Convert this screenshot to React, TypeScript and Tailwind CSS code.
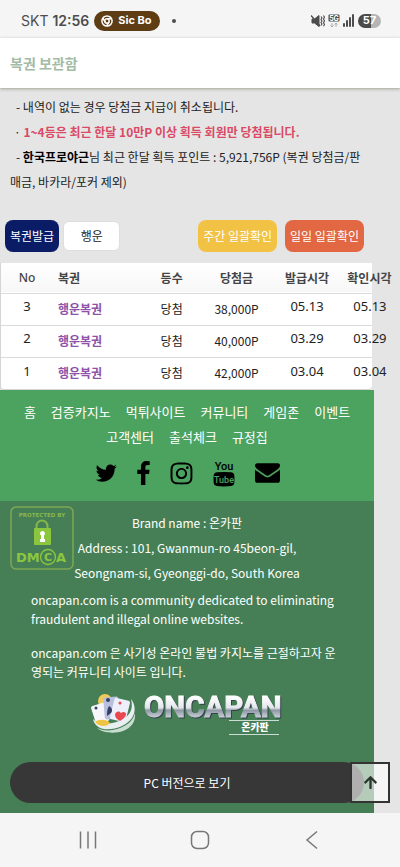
import React from 'react';
import { FaInstagram, FaArrowUp } from 'react-icons/fa';

const tickets = [
  { no: 3, name: '행운복권', rank: '당첨', prize: '38,000P', issued: '05.13', checked: '05.13' },
  { no: 2, name: '행운복권', rank: '당첨', prize: '40,000P', issued: '03.29', checked: '03.29' },
  { no: 1, name: '행운복권', rank: '당첨', prize: '42,000P', issued: '03.04', checked: '03.04' },
];

const menu = ['홈', '검증카지노', '먹튀사이트', '커뮤니티', '게임존', '이벤트', '고객센터', '출석체크', '규정집'];

const StatusBar = () => (
  <div className="flex h-[38px] items-center bg-[#f5f5f5] pr-[19px] pl-[21px] pt-[3px] font-['Inter',sans-serif] text-[#4d4d4d]">
    <span className="text-sm">SKT</span>
    <span className="ml-1 text-sm font-semibold">12:56</span>
    <span className="ml-[5px] flex h-5 items-center gap-[5px] rounded-full bg-[#5e3c14] pr-2 pl-[7px] text-[11px] font-bold text-white">
      <svg viewBox="0 0 24 24" className="h-3 w-3" fill="none" stroke="currentColor" strokeWidth="3">
        <circle cx="12" cy="12" r="10.2" />
        <circle cx="12" cy="12" r="4.4" />
        <path d="M12 7.6h9M8.2 14.2 3.7 6.4M15.8 14.2l-4.6 8" />
      </svg>
      Sic Bo
    </span>
    <span className="ml-3 h-1 w-1 rounded-full bg-[#4d4d4d]" />
    <div className="ml-auto flex items-center gap-[3px]">
      <svg viewBox="0 0 14 14" className="h-[14px] w-[14px]" fill="none" stroke="#4d4d4d">
        <path d="M1 5h2.5L8 1.5v11L3.5 9H1z" fill="#4d4d4d" />
        <path d="M0 1.5 9 12" strokeWidth="1.4" />
        <path d="M10 2.5l1 1.5-1 1.5 1 1.5-1 1.5 1 1.5-1 1.5M12.5 1.5l1 1.8-1 1.8 1 1.8-1 1.8 1 1.8-1 1.8" strokeWidth="1.1" />
      </svg>
      <svg viewBox="0 0 12 14" className="h-[14px] w-3">
        <rect x="0.5" y="0.5" width="11" height="7" rx="1" fill="#4d4d4d" />
        <text x="6" y="6.5" textAnchor="middle" fontSize="7" fontWeight="700" fill="#fff">5G</text>
        <path d="M4 9v4M2.5 11.5 4 13l1.5-1.5M8 13V9M6.5 10.5 8 9l1.5 1.5" fill="none" stroke="#a8a8a8" />
      </svg>
      <svg viewBox="0 0 12 13" className="h-[13px] w-3" fill="#4d4d4d">
        <rect x="0" y="9" width="2" height="4" rx="1" />
        <rect x="3" y="6" width="2" height="7" rx="1" />
        <rect x="6" y="3" width="2" height="10" rx="1" />
        <rect x="9" y="0" width="2" height="13" rx="1" />
      </svg>
      <span className="flex h-[14px] w-[23px] items-center justify-center rounded-full bg-linear-to-r from-[#4a4a4a] from-57% to-[#b5b5b5] to-57% text-[11px] font-bold text-white">
        57
      </span>
    </div>
  </div>
);

const DmcaBadge = () => (
  <svg viewBox="0 0 64 64" className="h-16 w-16" role="img" aria-label="Protected by DMCA">
    <rect x="1" y="1" width="62" height="62" rx="5" fill="none" stroke="#7ea854" strokeWidth="1.5" />
    <text x="32" y="11" textAnchor="middle" fontFamily="DejaVu Sans" fontSize="5.5" fontWeight="700" fill="#86b84c">
      PROTECTED BY
    </text>
    <path d="M26.5 22v-2a5.5 5.5 0 0 1 11 0v2" fill="none" stroke="#86b84c" strokeWidth="2" />
    <rect x="24" y="22" width="17" height="17" rx="1" fill="#8cc63f" />
    <path d="M32.5 25a2.5 2.5 0 0 0-1.5 4.5V33h-1v3h5v-3h-1v-3.5a2.5 2.5 0 0 0-1.5-4.5z" fill="#fff" />
    <g fontFamily="DejaVu Sans" fontSize="13" fontWeight="700" fill="#8cc63f">
      <text x="6" y="56">DM</text>
      <text x="46" y="56">A</text>
      <text x="38" y="55" textAnchor="middle" fontSize="11">C</text>
    </g>
    <circle cx="38" cy="51" r="7.5" fill="none" stroke="#8cc63f" strokeWidth="1.3" />
  </svg>
);

const TwitterIcon = () => (
  <svg viewBox="60 250 1640 1350" className="h-[19px] w-[22px]" fill="currentColor">
    <path d="M1684 408q-67 98-162 167 1 14 1 42 0 130-38 259.5t-115.5 248.5-184.5 210.5-258 146-323 54.5q-271 0-496-145 35 4 78 4 225 0 401-138-105-2-188-64.5t-114-159.5q33 5 61 5 43 0 85-11-112-23-185.5-111.5t-73.5-205.5v-4q68 38 146 41-66-44-105-115t-39-154q0-88 44-163 121 149 294.5 238.5t371.5 99.5q-8-38-8-74 0-134 94.5-228.5t228.5-94.5q140 0 236 102 109-21 205-78-37 115-142 178 93-10 186-50z" />
  </svg>
);

const FacebookIcon = () => (
  <svg viewBox="470 0 880 1670" className="h-6 w-[13px]" fill="currentColor">
    <path d="M1343 12v264h-157q-86 0-116 36t-30 108v189h293l-39 296h-254v759h-306v-759h-255v-296h255v-218q0-186 104-288.5t277-102.5q147 0 228 12z" />
  </svg>
);

const MailIcon = () => (
  <svg viewBox="0 256 1792 1408" className="h-5 w-[25px]" fill="currentColor">
    <path d="M1792 710v794q0 66-47 113t-113 47h-1472q-66 0-113-47t-47-113v-794q44 49 101 87 362 246 497 345 57 42 92.5 65.5t94.5 48 110 24.5h2q51 0 110-24.5t94.5-48 92.5-65.5q170-123 498-345 57-39 100-87zm0-294q0 79-49 151t-122 123q-376 261-468 325-10 7-42.5 31t-54 38.5-52 32.5-57.5 27-50 9h-2q-23 0-50-9t-57.5-27-52-32.5-54-38.5-42.5-31q-91-64-262-182.5t-205-142.5q-62-42-117-115.5t-55-136.5q0-78 41.5-130t118.5-52h1472q65 0 112.5 47t47.5 113z" />
  </svg>
);

const YoutubeIcon = () => (
  <svg viewBox="0 0 22 27" className="h-[27px] w-[22px]" fontFamily="Roboto, sans-serif" textAnchor="middle">
    <text x="11" y="10" fontSize="11" fontWeight="500">You</text>
    <path d="M4 12.3q7-.8 14 0 3 .3 3.3 3 .4 4 0 8-.3 2.600-3 2.800-7.300.6-14.600 0-2.700-.2-3-2.800-.4-4 0-8 .3-2.700 3.300-3z" />
    <text x="11" y="23" fontSize="9" fontWeight="500" fill="#4ca25f">Tube</text>
  </svg>
);

const Logo = () => (
  <svg viewBox="0 0 192 46" className="h-[46px] w-48" role="img" aria-label="ONCAPAN 온카판">
    <defs>
      <linearGradient id="chrome" x1="0" y1="0" x2="0" y2="1">
        <stop offset="20%" stopColor="#ffffff" />
        <stop offset="52%" stopColor="#e3e6ec" />
        <stop offset="60%" stopColor="#8f98a6" />
        <stop offset="80%" stopColor="#c9ced6" />
      </linearGradient>
    </defs>
    <circle cx="14" cy="10" r="7" fill="#efc95a" />
    <path d="M2 28c2 11 16 13 29 7s16-18 9-27c3 11-2 18-12 22S8 34 2 28z" fill="#e8eff0" />
    <path d="M6 37c8 4 20 3 29-3 5-3 8-8 9-12 1 9-4 15-12 18S11 42 6 37z" fill="#c9ddd0" />
    <rect x="2" y="13" width="14" height="19" rx="2" fill="#f7f7fb" transform="rotate(-18 9 22)" />
    <rect x="13" y="6" width="15" height="22" rx="2" fill="#b9c0df" transform="rotate(-5 20 17)" />
    <rect x="21" y="8" width="16" height="22" rx="2" fill="#edeffb" transform="rotate(14 29 19)" />
    <path d="M18 15c3 2 4 4 2 7l-4 3c0-4 0-7 2-10z" fill="#354064" />
    <circle cx="17" cy="9" r="2" fill="#354064" />
    <circle cx="5" cy="17" r="1.5" fill="#354064" />
    <circle cx="29" cy="12" r="1.5" fill="#e64a50" />
    <path d="M29 30c-6-3-6-8-3-9 2-1 3 0 4 1 2-2 5-1 5 1 0 3-3 5-6 7z" fill="#e8484e" />
    <path d="M4 31c3-3 12-3 15 1-3 4-11 4-15-1z" fill="#efc443" />
    <text
      x="53"
      y="26"
      fontFamily="Roboto, sans-serif"
      fontSize="29.5"
      fontWeight="700"
      fill="url(#chrome)"
      stroke="url(#chrome)"
      className="drop-shadow-[1px_1px_0_#34424a]"
    >
      ONCAPAN
    </text>
    <path d="M138 29.5h50M138 43.5h50" stroke="#cfdcd3" />
    <text x="164" y="40" textAnchor="middle" fontSize="10" fontWeight="900" fill="#fff">온카판</text>
  </svg>
);

const App: React.FC = () => {
  return (
    <div className="flex min-h-screen flex-col bg-[#e5e5e5] font-['Noto_Sans_CJK_KR',sans-serif] text-xs text-[#222]">
      <StatusBar />

      <header className="z-10 flex h-[50px] items-center bg-white px-[10px] shadow-[0_1px_3px_rgba(90,100,70,0.5)]">
        <h1 className="text-sm font-bold text-[#a4bba5]">복권 보관함</h1>
      </header>

      <main>
        <div className="mr-[7%] px-[10px] pt-[6px] leading-[25px]">
          <p className="pl-[6px]">- 내역이 없는 경우 당첨금 지급이 취소됩니다.</p>
          <p className="pl-1">
            · <strong className="font-bold text-[#d94a66]">1~4등은 최근 한달 10만P 이상 획득 회원만 당첨됩니다.</strong>
          </p>
          <p className="indent-[6px]">
            - <strong className="font-bold text-black">한국프로야근</strong>님 최근 한달 획득 포인트 : 5,921,756P (복권 당첨금/판매금, 바카라/포커 제외)
          </p>
        </div>

        <div className="mt-[26px] mr-[9%] flex items-center pl-[5px]">
          <button className="h-8 rounded-lg bg-[#0b1c66] px-[5px] text-white">복권발급</button>
          <button className="ml-1 h-[30px] w-[57px] rounded-md border border-[#dedede] bg-white">행운</button>
          <button className="ml-auto h-8 rounded-lg bg-[#f2c244] px-[5px] text-white">주간 일괄확인</button>
          <button className="ml-2 h-8 rounded-lg bg-[#e16843] px-[5px] text-white">일일 일괄확인</button>
        </div>

        <div className="mt-[11px] w-[93%] rounded-b border-b border-l border-[#d5d5d5] bg-white">
          <table className="w-full table-fixed border-collapse whitespace-nowrap">
            <colgroup>
              <col className="w-[14%]" />
              <col className="w-[24%]" />
              <col className="w-[16%]" />
              <col className="w-[19%]" />
              <col className="w-[19%]" />
              <col className="w-[8%]" />
            </colgroup>
            <thead>
              <tr className="h-[30px] border-b border-[#dcdcdc] bg-linear-to-b from-white to-[#f7f7f7] text-[#444]">
                <th className="font-['Noto_Sans'] font-medium">No</th>
                <th className="pl-[5px] text-left font-bold">복권</th>
                <th className="font-bold">등수</th>
                <th className="font-bold">당첨금</th>
                <th className="font-bold">발급시각</th>
                <th className="pl-[5px] text-left font-bold">확인시각</th>
              </tr>
            </thead>
            <tbody>
              {tickets.map((t) => (
                <tr key={t.no} className="h-8 border-b border-[#dcdcdc] text-center last:border-b-0">
                  <td className="pb-1 font-['Noto_Sans'] text-[13px]">{t.no}</td>
                  <td className="pl-[5px] text-left font-bold text-[#8e52a8]">{t.name}</td>
                  <td>{t.rank}</td>
                  <td>{t.prize}</td>
                  <td className="pb-1 font-['Noto_Sans'] text-[13px]">{t.issued}</td>
                  <td className="pb-1 pl-[11px] text-left font-['Noto_Sans'] text-[13px]">{t.checked}</td>
                </tr>
              ))}
            </tbody>
          </table>
        </div>
      </main>

      <footer className="relative flex-1">
        <div className="mr-[26px] bg-[#4ca25f] px-4 pt-[9px] pb-[14px]">
          <nav className="flex flex-wrap justify-center gap-x-[15px] text-[13px] leading-[25px] text-white">
            {menu.map((item) => (
              <a key={item} href="#">{item}</a>
            ))}
          </nav>
          <div className="mt-[10px] flex h-7 items-center justify-center gap-5 text-black">
            <a href="#" aria-label="Twitter"><TwitterIcon /></a>
            <a href="#" aria-label="Facebook"><FacebookIcon /></a>
            <a href="#" aria-label="Instagram"><FaInstagram className="h-[25px] w-[23px]" /></a>
            <a href="#" aria-label="YouTube"><YoutubeIcon /></a>
            <a href="#" aria-label="Mail"><MailIcon /></a>
          </div>
        </div>

        <div className="relative mr-[26px] bg-[#467f55] pt-[9px] pb-[10px] text-white">
          <div className="absolute top-[5px] left-[10px]">
            <DmcaBadge />
          </div>
          <p className="px-[70px] text-center leading-[25px]">
            Brand name : 온카판
            <br />
            Address : 101, Gwanmun-ro 45beon-gil, Seongnam-si, Gyeonggi-do, South Korea
          </p>
          <p className="mt-[5px] px-[31px] leading-[19px]">
            oncapan.com is a community dedicated to eliminating fraudulent and illegal online websites.
          </p>
          <p className="mt-[15px] px-[31px] leading-[19px]">
            oncapan.com 은 사기성 온라인 불법 카지노를 근절하고자 운영되는 커뮤니티 사이트 입니다.
          </p>
          <div className="mt-[10px] flex justify-center">
            <Logo />
          </div>
          <div className="mt-[25px] px-[10px]">
            <button className="h-[41px] w-full rounded-full bg-[#373737] text-white">PC 버전으로 보기</button>
          </div>
        </div>

        <button
          aria-label="맨 위로"
          className="absolute right-[10px] bottom-[10px] flex h-[41px] w-10 items-center justify-center border-2 border-[#333] bg-white/60 text-[#2c352e]"
        >
          <FaArrowUp className="h-[15px] w-[15px]" />
        </button>
      </footer>

      <div className="flex h-[54px] items-center justify-around bg-[#f5f5f5] px-8 text-[#777]">
        <button aria-label="최근 앱">
          <svg viewBox="0 0 20 20" className="h-5 w-5" fill="none" stroke="currentColor" strokeWidth="1.5">
            <path d="M2.5 1.5v17M10 1.5v17M17.5 1.5v17" />
          </svg>
        </button>
        <button aria-label="홈 화면">
          <svg viewBox="0 0 20 20" className="h-5 w-5" fill="none" stroke="currentColor" strokeWidth="1.5">
            <rect x="1.5" y="1.5" width="17" height="17" rx="5.5" />
          </svg>
        </button>
        <button aria-label="뒤로">
          <svg viewBox="0 0 20 20" className="h-5 w-5" fill="none" stroke="currentColor" strokeWidth="1.5">
            <path d="M15 1.5 5 10l10 8.5" />
          </svg>
        </button>
      </div>
    </div>
  );
};

export default App;
